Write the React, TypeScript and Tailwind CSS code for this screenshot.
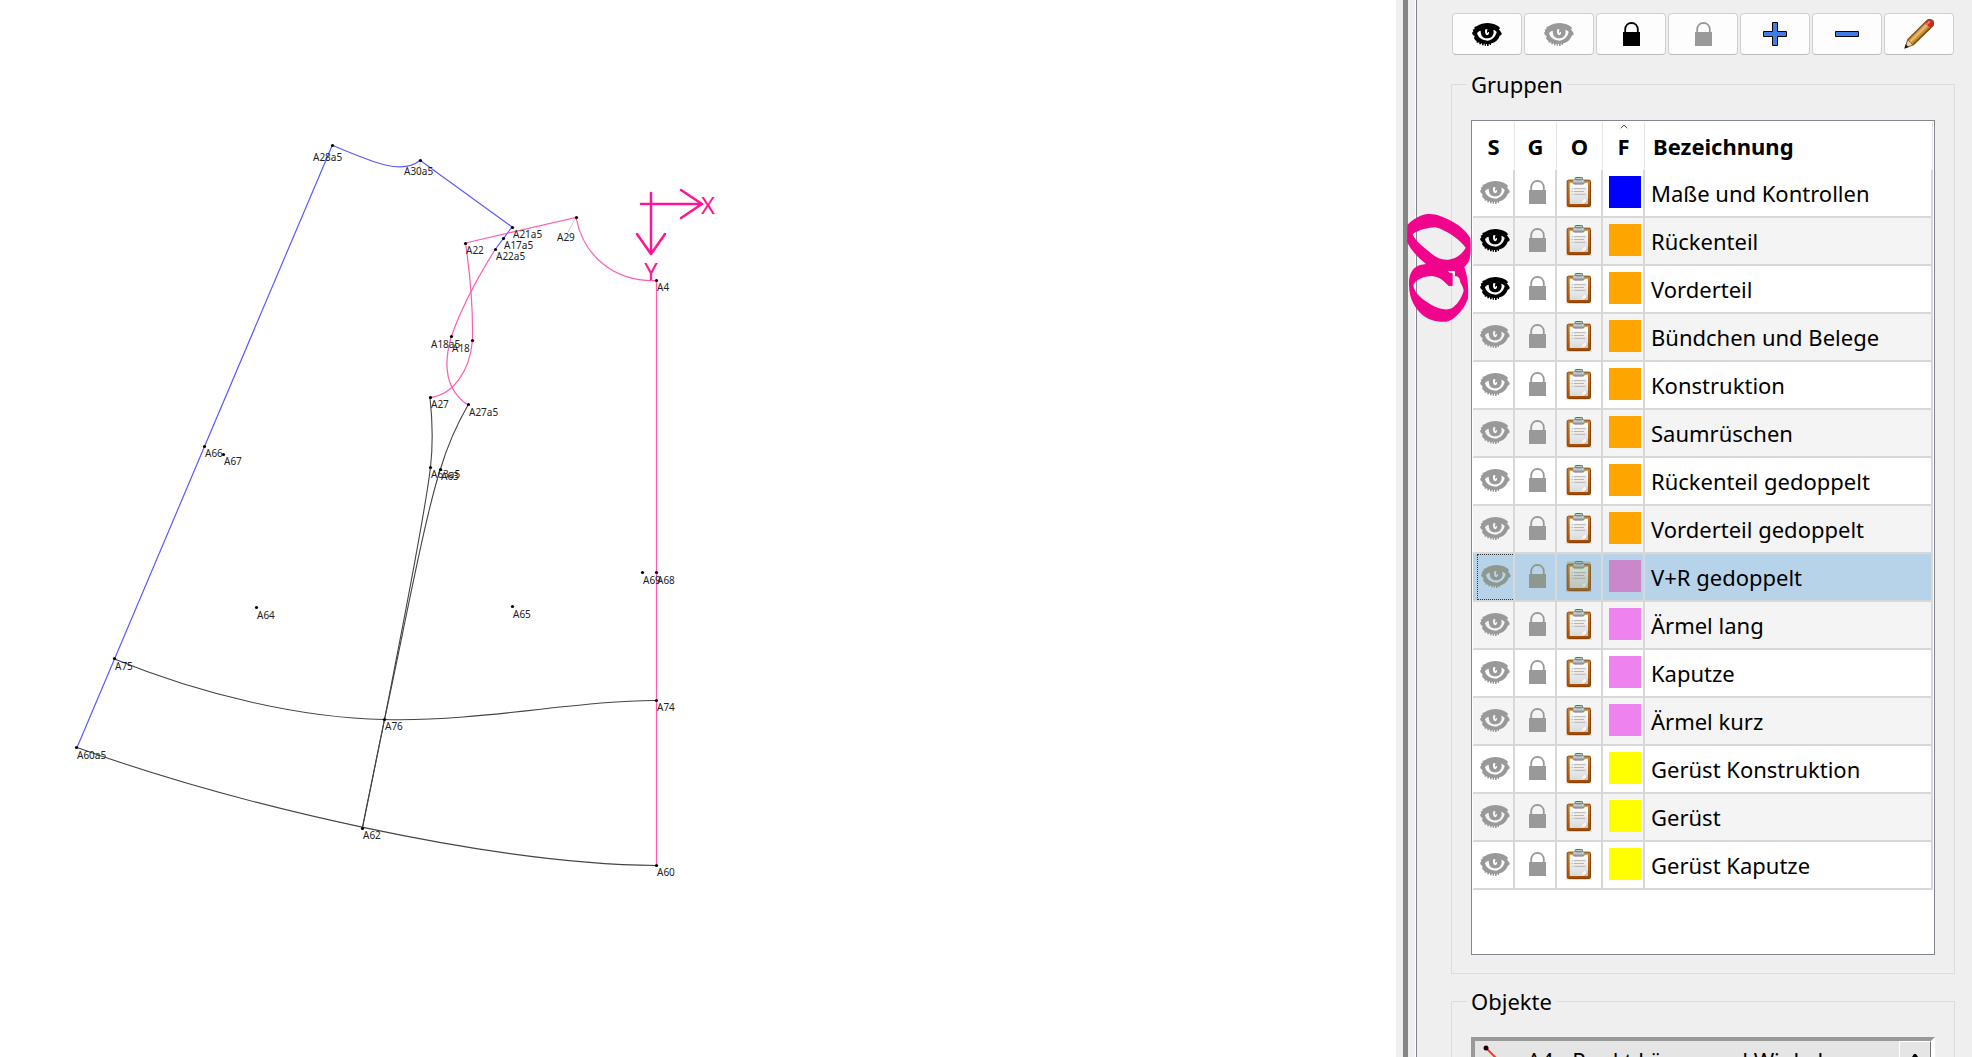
import { useState } from "react";

interface Group {
  name: string;
  color: string;
  visible?: boolean;
}

interface PatternPoint {
  label: string;
  x: number;
  y: number;
  // label anchor (left, baseline)
  lx: number;
  ly: number;
}

const GROUPS: Group[] = [
  { name: "Maße und Kontrollen", color: "#0000ff" },
  { name: "Rückenteil", color: "#ffa500", visible: true },
  { name: "Vorderteil", color: "#ffa500", visible: true },
  { name: "Bündchen und Belege", color: "#ffa500" },
  { name: "Konstruktion", color: "#ffa500" },
  { name: "Saumrüschen", color: "#ffa500" },
  { name: "Rückenteil gedoppelt", color: "#ffa500" },
  { name: "Vorderteil gedoppelt", color: "#ffa500" },
  { name: "V+R gedoppelt", color: "#ee82ee" },
  { name: "Ärmel lang", color: "#ee82ee" },
  { name: "Kaputze", color: "#ee82ee" },
  { name: "Ärmel kurz", color: "#ee82ee" },
  { name: "Gerüst Konstruktion", color: "#ffff00" },
  { name: "Gerüst", color: "#ffff00" },
  { name: "Gerüst Kaputze", color: "#ffff00" },
];

const POINTS: PatternPoint[] = [
  { label: "A28a5", x: 332, y: 145, lx: 313, ly: 161 },
  { label: "A30a5", x: 420, y: 160, lx: 404, ly: 175 },
  { label: "A21a5", x: 512, y: 227, lx: 513, ly: 238 },
  { label: "A17a5", x: 503, y: 238, lx: 504, ly: 249 },
  { label: "A22a5", x: 495, y: 249, lx: 496, ly: 260 },
  { label: "A22", x: 465, y: 243, lx: 466, ly: 254 },
  { label: "A29", x: 576, y: 217, lx: 557, ly: 241 },
  { label: "A4", x: 656, y: 280, lx: 657, ly: 291 },
  { label: "A18a5", x: 451, y: 336, lx: 431, ly: 348 },
  { label: "A18", x: 472, y: 340, lx: 452, ly: 352 },
  { label: "A27", x: 430, y: 397, lx: 431, ly: 408 },
  { label: "A27a5", x: 468, y: 404, lx: 469, ly: 416 },
  { label: "A63a5", x: 430, y: 467, lx: 431, ly: 478 },
  { label: "A63", x: 440, y: 469, lx: 441, ly: 480 },
  { label: "A66", x: 204, y: 446, lx: 205, ly: 457 },
  { label: "A67", x: 223, y: 454, lx: 224, ly: 465 },
  { label: "A64", x: 256, y: 607, lx: 257, ly: 619 },
  { label: "A65", x: 512, y: 606, lx: 513, ly: 618 },
  { label: "A69", x: 642, y: 572, lx: 643, ly: 584 },
  { label: "A68", x: 656, y: 572, lx: 657, ly: 584 },
  { label: "A75", x: 114, y: 658, lx: 115, ly: 670 },
  { label: "A74", x: 656, y: 700, lx: 657, ly: 711 },
  { label: "A76", x: 384, y: 719, lx: 385, ly: 730 },
  { label: "A60a5", x: 76, y: 747, lx: 77, ly: 759 },
  { label: "A62", x: 362, y: 828, lx: 363, ly: 839 },
  { label: "A60", x: 656, y: 865, lx: 657, ly: 876 },
];

function EyeIcon({ color }: { color: string }) {
  return (
    <svg width="30" height="23" viewBox="0 0 90 69" fill={color} aria-hidden="true">
      <path
        fillRule="evenodd"
        d="M0 30 L4 25 L2 20 L8 17 L7 12 L14 10 C24 3 36 0 48 0 C62 1 74 6 82 12 L84 18 L80 18 C84 22 87 27 89 31 L88 36 L83 38 L80 46 L73 54 C66 60 58 62 48 63 C32 64 18 60 10 52 L6 46 L8 40 L3 36 Z
        M15 31 C17 27 21 24 26 23 C26 33 29 41 36 44 C43 47 53 46 59 41 C65 35 66 28 64 20 C68 21 72 24 74 27 C71 41 60 52 46 53 C30 52 19 44 15 31 Z
        M40 19 C38 25 39 33 43 36 C48 38 52 33 51 27 L48 27 C48 31 45 31 45 28 L46 18 Z"
      />
      <path d="M22 58h5v6h-5zM30 59h5v8h-5zM38 60h4v8h-4zM45 60h5v9h-5zM53 59h4v7h-4zM14 53h5v6h-5z" />
    </svg>
  );
}

function LockIcon({ color }: { color: string }) {
  return (
    <svg width="17" height="24" viewBox="0 0 17 24" aria-hidden="true">
      <path d="M2.2 11V7.5C2.2 3.6 4.8 1 8.5 1S14.8 3.6 14.8 7.5V11" fill="none" stroke={color} strokeWidth="1.8" />
      <rect x="0" y="10" width="17" height="14" fill={color} />
    </svg>
  );
}

function ClipboardIcon({ tinted }: { tinted?: boolean }) {
  return (
    <svg width="28" height="31" viewBox="0 0 84 93" aria-hidden="true">
      <defs>
        <linearGradient id="board" x1="0" y1="0" x2="0" y2="1">
          <stop offset="0" stopColor="#c98228" />
          <stop offset="1" stopColor="#a04d04" />
        </linearGradient>
        <linearGradient id="paper" x1="0" y1="0" x2="0" y2="1">
          <stop offset="0" stopColor="#fdfdfd" />
          <stop offset="1" stopColor="#dadada" />
        </linearGradient>
        <linearGradient id="clip" x1="0" y1="0" x2="0" y2="1">
          <stop offset="0" stopColor="#f0f0f0" />
          <stop offset="1" stopColor="#828482" />
        </linearGradient>
      </defs>
      <ellipse cx="41" cy="90" rx="41" ry="3" fill="#000" opacity=".15" />
      <rect x="6.5" y="9.5" width="70" height="79" rx="4" fill="url(#board)" stroke="#8a4206" strokeWidth="3" />
      <rect x="14" y="17" width="55" height="64" fill="url(#paper)" />
      <path d="M53 68 L65 66 L66 79 L52 80 Z" fill="#f8f8f8" />
      <path d="M53 80 Q64 78 66 66 L69 66 V81 H53 Z" fill="#c4c4c4" />
      <path d="M27 35H62M27 43.5H57M27 52H62" stroke="#b4b4b4" strokeWidth="3" />
      <path d="M20 35h3M20 43.5h3M20 52h3" stroke="#a8a8a8" strokeWidth="3" />
      <path d="M24 12 Q24 8 29 8 H53 Q58 8 58 12 V18 Q58 22 52 22 H30 Q24 22 24 18 Z" fill="url(#clip)" stroke="#777977" strokeWidth="1.5" />
      <rect x="30.5" y="1.5" width="22" height="7" rx="2" fill="#b4d0d0" stroke="#587474" strokeWidth="3" />
      {tinted && <rect x="5" y="1" width="73" height="90" rx="4" fill="#78997f" opacity=".31" />}
    </svg>
  );
}

function PlusIcon() {
  return (
    <svg width="24" height="24" viewBox="0 0 24 24" aria-hidden="true">
      <path d="M9.5.5h5v9h9v5h-9v9h-5v-9h-9v-5h9z" fill="#3f7de4" stroke="#000" />
    </svg>
  );
}

function MinusIcon() {
  return (
    <svg width="24" height="24" viewBox="0 0 24 24" aria-hidden="true">
      <path d="M.5 9.5h23v5h-23z" fill="#3f7de4" stroke="#000" />
    </svg>
  );
}

function PencilIcon() {
  return (
    <svg width="30" height="30" viewBox="0 0 90 90" aria-hidden="true">
      <path d="M3 87 L11 62 L27 78 Z" fill="#ead2a0" stroke="#77552a" strokeWidth="3" />
      <path d="M1 89 L5 76 L14 84 Z" fill="#201a12" />
      <path d="M11 62 L62 11 L80 28 L27 78 Q25 71 19 71 Q18 64 11 62 Z" fill="#cf9438" />
      <path d="M17 65 L66 16 L71 21 L21 70 Z" fill="#e8bc68" />
      <path d="M24 76 L75 25 L79 29 L28 79 Z" fill="#a0661a" />
      <path d="M62 11 L70 4 Q78 -1 86 5 Q91 12 87 20 L79 28 Z" fill="#e02020" />
      <path d="M66 14 L73 7 Q77 5 80 8 L71 18 Z" fill="#ff7070" />
      <path d="M11 62 L70 4 Q78 -1 86 5 Q91 12 87 20 L27 78" fill="none" stroke="#77552a" strokeWidth="4" />
    </svg>
  );
}

const TOOLS = [
  { label: "Alle Gruppen anzeigen", icon: <EyeIcon color="#000000" /> },
  { label: "Alle Gruppen ausblenden", icon: <EyeIcon color="#999999" /> },
  { label: "Alle Gruppen sperren", icon: <LockIcon color="#000000" /> },
  { label: "Alle Gruppen entsperren", icon: <LockIcon color="#999999" /> },
  { label: "Gruppe hinzufügen", icon: <PlusIcon /> },
  { label: "Gruppe löschen", icon: <MinusIcon /> },
  { label: "Gruppe bearbeiten", icon: <PencilIcon /> },
];

function PatternCanvas() {
  return (
    <svg width="1396" height="1057" viewBox="0 0 1396 1057" className="block max-w-none" role="img" aria-label="Schnittmuster">
      {/* Back piece */}
      <g fill="none" stroke="#5a5aff" strokeWidth="1.2">
        <path d="M77 747.5 L114.5 659 L204.5 446.5 L332.3 145.3" />
        <path d="M332.3 145.3 C370 161 402 176 420 160.3 L512 227 L495.5 249" />
      </g>

      {/* Front piece and armholes */}
      <g fill="none" stroke="#ff5cae" strokeWidth="1.2">
        <path d="M465.5 243 L576 217.5 C584 258 616 282 656.5 280.5 V865.5" />
        <path d="M465.5 243 C471 280 473 310 472.5 340 C470 372 452 395 430 397.5" />
        <path d="M495.5 249 C476 280 462 306 451.5 336 C442 368 447 391 468 405" />
      </g>

      {/* Side seams and hems */}
      <g fill="none" stroke="#444444" strokeWidth="1.1">
        <path d="M430 397.5 C433 425 433 445 430.5 467 C425 515 400 640 384.5 719.5 L362.3 828.3" />
        <path d="M468 405 C456 426 447 447 440.5 469 C425 515 402 640 384.5 719.5 L362.3 828.3" />
        <path d="M114.5 659 C200 694 300 718 384 719.5 C480 722 580 700 656.5 700.5" />
        <path d="M77 747.5 C240 806 490 864 656.5 865.5" />
      </g>

      <path d="M575 219 L568 232 M420 162 V167" stroke="#cccccc" fill="none" />

      {/* Origin axes */}
      <g fill="none" stroke="#ff1493" strokeWidth="2.5" strokeLinecap="round" strokeLinejoin="round">
        <path d="M641 204 H702 M681 190 L702 204 L681 218" />
        <path d="M651 193 V254 M637 234 L651 254 L665 234" />
      </g>
      <g fill="#ff1493" fontSize="24" textAnchor="middle">
        <text x="708" y="214">X</text>
        <text x="651" y="280">Y</text>
      </g>

      <g fontSize="10" fill="#222222">
        {POINTS.map((p) => (
          <g key={p.label}>
            <circle cx={p.x + 0.5} cy={p.y + 0.5} r="1.6" fill="#000000" />
            <text x={p.lx} y={p.ly}>
              {p.label}
            </text>
          </g>
        ))}
      </g>
    </svg>
  );
}

export default function App() {
  const [selected, setSelected] = useState(8);

  return (
    <div className="flex h-screen overflow-hidden bg-[#efefef] text-[22px] leading-[30px] text-black [font-family:'Noto_Sans','Open_Sans',sans-serif]">
      <main className="min-w-0 flex-1 overflow-hidden bg-white">
        <PatternCanvas />
      </main>

      {/* Splitter */}
      <div className="ml-[7px] mr-[7px] w-[5px] shrink-0 bg-[#858585]" />

      <aside className="relative w-[557px] shrink-0 border-l border-white">
        <div className="h-full border-l border-[#7f858e] pl-[34px] pr-[17px] pt-[13px]">
          <div className="flex gap-0.5 px-px">
            {TOOLS.map((tool) => (
              <button
                key={tool.label}
                aria-label={tool.label}
                className="flex h-[42px] flex-1 items-center justify-center rounded border border-[#d0d0d0] border-b-[#bcbcbc] bg-[#fdfdfd]"
              >
                {tool.icon}
              </button>
            ))}
          </div>

          <fieldset className="mt-3.5 border border-[#dcdcdc] px-[19px] pb-[18px]">
            <legend className="-ml-1 px-1">Gruppen</legend>
            <div className="mt-[21px] border border-[#82878f] bg-white px-px pb-16 pt-px">
              <table className="w-full table-fixed border-separate border-spacing-0">
                <colgroup>
                  <col className="w-[42px]" />
                  <col className="w-[42px]" />
                  <col className="w-[46px]" />
                  <col className="w-[42px]" />
                  <col />
                </colgroup>
                <thead>
                  <tr className="h-12">
                    <th className="border-r border-[#e5e5e5] p-0">S</th>
                    <th className="border-r border-[#e5e5e5] p-0">G</th>
                    <th className="border-r border-[#e5e5e5] p-0">O</th>
                    <th className="relative border-r border-[#e5e5e5] p-0">
                      F
                      <svg className="absolute left-[17px] top-0.5" width="8" height="5" viewBox="0 0 8 5" aria-hidden="true">
                        <path d="M.7 4.3 L4 1 L7.3 4.3" fill="none" stroke="#555555" />
                      </svg>
                    </th>
                    <th className="border-r border-[#e5e5e5] py-0 pl-2 pr-0 text-left">Bezeichnung</th>
                  </tr>
                </thead>
                <tbody>
                  {GROUPS.map((group, i) => {
                    const isSelected = i === selected;
                    const muted = isSelected ? "#8e988f" : "#999999";
                    return (
                      <tr
                        key={group.name}
                        onClick={() => setSelected(i)}
                        className={`h-12 ${isSelected ? "bg-[#b7d3ea]" : i % 2 ? "bg-[#f4f4f4]" : "bg-white"}`}
                      >
                        <td className="border-b-2 border-r-2 border-[#d8d8d8] py-0 pl-1 pr-0">
                          <button
                            aria-label={`${group.name} anzeigen`}
                            className={`flex h-[46px] w-full items-center justify-center pb-0.5 ${
                              isSelected ? "border-y border-l border-dotted border-[#333333]" : ""
                            }`}
                          >
                            <EyeIcon color={group.visible ? "#000000" : muted} />
                          </button>
                        </td>
                        <td className="border-b-2 border-r-2 border-[#d8d8d8] py-0 pl-1 pr-0">
                          <button aria-label={`${group.name} sperren`} className="flex h-[46px] w-full items-center justify-center pb-0.5">
                            <LockIcon color={muted} />
                          </button>
                        </td>
                        <td className="border-b-2 border-r-2 border-[#d8d8d8] p-0">
                          <button aria-label={`Objekte in ${group.name}`} className="flex h-[46px] w-full items-center justify-center pb-0.5">
                            <ClipboardIcon tinted={isSelected} />
                          </button>
                        </td>
                        <td className="border-b-2 border-r-2 border-[#d8d8d8] py-0 pl-1 pr-0">
                          <button aria-label={`Farbe von ${group.name}`} className="flex h-[46px] w-full items-center justify-center pb-0.5">
                            <span
                              className="block size-8"
                              style={{ backgroundColor: isSelected && group.color === "#ee82ee" ? "#ca88cb" : group.color }}
                            />
                          </button>
                        </td>
                        <td className="truncate border-b-2 border-r-2 border-[#d8d8d8] py-0 pl-1.5 pr-0">{group.name}</td>
                      </tr>
                    );
                  })}
                </tbody>
              </table>
            </div>
          </fieldset>

          <fieldset className="mt-3 border border-[#dcdcdc] px-[19px] pb-[18px]">
            <legend className="-ml-1 px-1">Objekte</legend>
            <div className="mt-[21px] flex border-4 border-b-white border-l-[#999999] border-r-white border-t-[#999999] bg-[#e5e5e5]">
              <ul className="flex-1 py-1">
                <li className="flex items-start gap-5 pl-2">
                  <svg width="24" height="24" viewBox="0 0 24 24" aria-hidden="true">
                    <path d="M3 3 L20 20" stroke="#f03c1e" strokeWidth="2" />
                    <circle cx="3" cy="3" r="2.5" fill="#200000" />
                  </svg>
                  A4 - Punkt Länge und Winkel
                </li>
              </ul>
              <button
                aria-label="Nach oben"
                className="flex w-8 items-start justify-center border border-b-[#707070] border-l-white border-r-[#707070] border-t-white pt-3"
              >
                <svg width="10" height="6" viewBox="0 0 10 6" aria-hidden="true">
                  <path d="M4 0 H6 L10 6 H0 Z" />
                </svg>
              </button>
            </div>
          </fieldset>
        </div>

        {/* Hand-drawn marker around the two visible groups */}
        <svg
          className="pointer-events-none absolute -left-4 top-[205px]"
          width="80"
          height="125"
          viewBox="0 0 240 375"
          fill="#f0048c"
          aria-hidden="true"
        >
          <path
            fillRule="evenodd"
            d="M22 60 C35 45 50 37 62 32 C80 24 105 27 118 32 C160 45 200 75 211 100 C213 130 213 155 205 172 L193 187 C203 215 206 240 204 280 C195 310 165 345 140 350 C110 352 85 345 68 330 C45 310 28 285 27 240 C26 215 32 190 60 180 L78 177 C50 155 30 130 21 110 Z
            M38 88 C55 74 85 68 107 67 C145 78 180 105 197 128 C185 150 165 162 145 164 C125 166 110 158 100 150 C75 130 48 112 38 88 Z
            M40 240 C46 225 70 213 95 213 C120 215 133 230 146 243 L158 243 L158 205 L148 203 L144 198 L165 198 L165 214 C178 214 180 222 181 232 C187 242 190 250 191 257 C185 280 170 300 155 310 C140 317 115 312 95 300 C70 285 42 265 40 240 Z"
          />
        </svg>
      </aside>
    </div>
  );
}
